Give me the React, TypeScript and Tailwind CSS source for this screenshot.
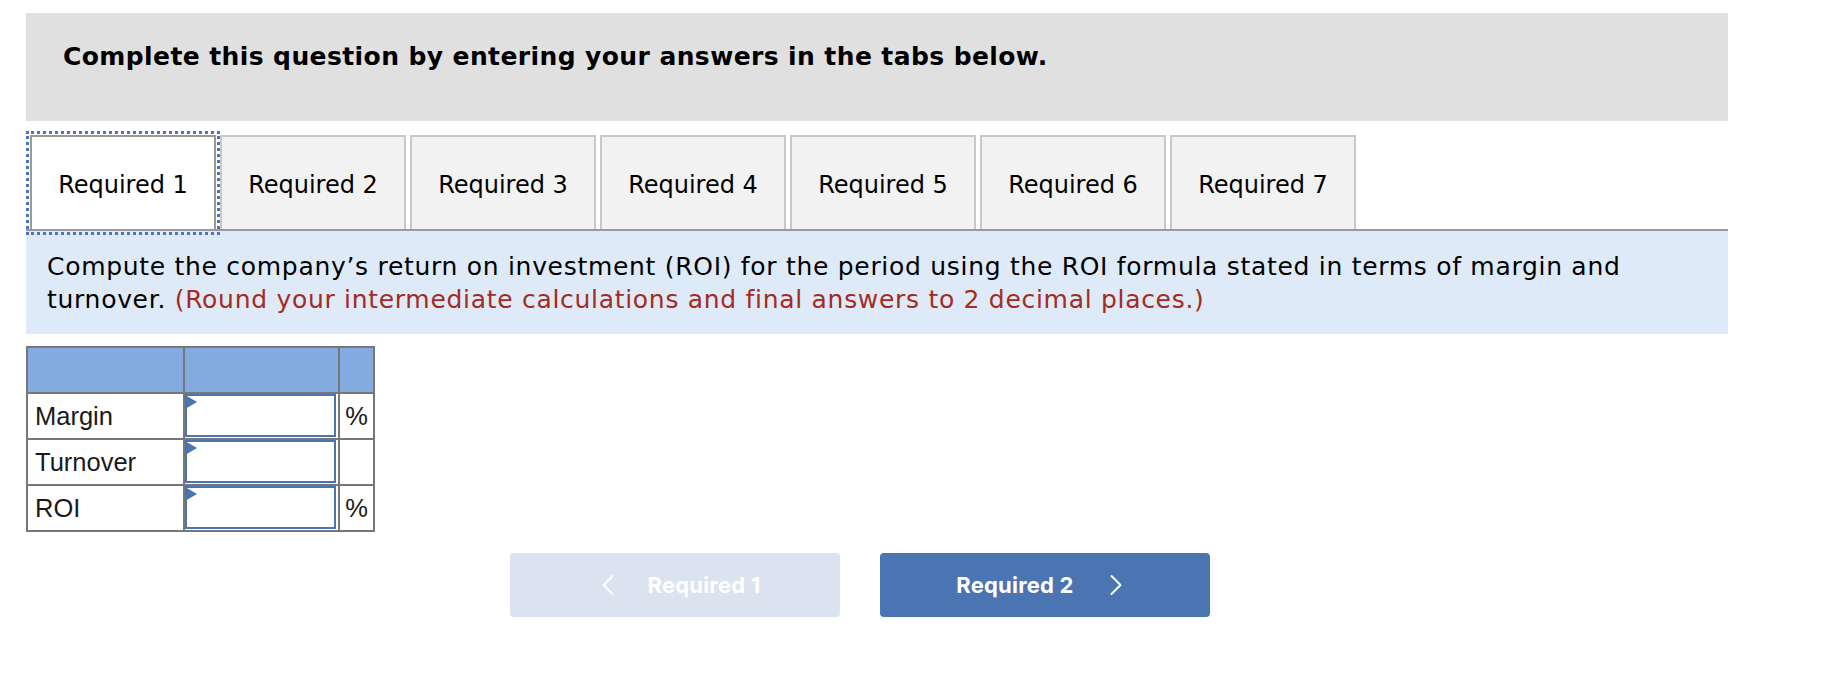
import { ChevronLeft, ChevronRight } from 'lucide-react';

const tabs = ['Required 1', 'Required 2', 'Required 3', 'Required 4', 'Required 5', 'Required 6', 'Required 7'];

const rows = [
  { label: 'Margin', unit: '%' },
  { label: 'Turnover', unit: '' },
  { label: 'ROI', unit: '%' },
];

function InputCell() {
  return (
    <div className="relative h-full w-full pr-[2px] pb-[1px]">
      <div className="h-full w-full border-2 border-[#4a74b4] bg-white" />
      <svg className="absolute left-0 top-[1px]" width="12" height="15" viewBox="0 0 12 15">
        <polygon points="0,0 12,7 0,14" fill="#4a74b4" />
      </svg>
    </div>
  );
}

export default function App() {
  return (
    <div className="min-h-[684px] w-[1830px] bg-white pl-[26px] pt-[13px]" style={{ fontFamily: '"DejaVu Sans", Verdana, sans-serif' }}>
      <div className="w-[1702px]">
        {/* Instruction header */}
        <div className="h-[108px] bg-[#e0e0e0] px-[37px] pt-[30px]">
          <h2 className="text-[25px] font-bold leading-[28px] tracking-[0.4px] text-black">
            Complete this question by entering your answers in the tabs below.
          </h2>
        </div>

        {/* Tabs */}
        <div className="mt-[14px] flex gap-[4px] border-b-2 border-[#999] pl-[4px]">
          {tabs.map((t, i) =>
            i === 0 ? (
              <div
                key={t}
                className="-mb-[2px] flex h-[96px] w-[186px] items-center justify-center border-2 border-[#999] bg-white pt-[3px] text-[24px] text-black outline-[3px] outline-offset-[1px] outline-dotted outline-[#4a74c0]"
              >
                {t}
              </div>
            ) : (
              <div
                key={t}
                className="flex h-[94px] w-[186px] items-center justify-center border-2 border-b-0 border-[#c8c8c8] bg-[#f2f2f2] pt-[3px] text-[24px] text-black"
              >
                {t}
              </div>
            )
          )}
        </div>

        {/* Prompt */}
        <div className="h-[103px] bg-[#deeaf7] px-[21px] pt-[19px] text-[25px] leading-[33px] tracking-[0.7px] text-black">
          Compute the company’s return on investment (ROI) for the period using the ROI formula stated in terms of margin and
          turnover. <span className="text-[#a52a22]">(Round your intermediate calculations and final answers to 2 decimal places.)</span>
        </div>

        {/* Table */}
        <div
          className="mt-[12px] grid w-[349px] grid-cols-[155px_153px_33px] gap-[2px] border-2 border-[#777] bg-[#777] text-[25.5px] text-[#1a1a1a]"
          style={{ fontFamily: '"Liberation Sans", Arial, sans-serif' }}
        >
          <div className="h-[44px] bg-[#83abdf]" />
          <div className="h-[44px] bg-[#83abdf]" />
          <div className="h-[44px] bg-[#83abdf]" />
          {rows.map((r) => (
            <div key={r.label} className="contents">
              <div className="flex h-[44px] items-center bg-white pl-[7px]">{r.label}</div>
              <div className="h-[44px] bg-white">
                <InputCell />
              </div>
              <div className="flex h-[44px] items-center justify-center bg-white">{r.unit}</div>
            </div>
          ))}
        </div>

        {/* Navigation buttons */}
        <div className="mt-[21px] flex gap-[40px] pl-[484px]" style={{ fontFamily: 'Inter, Roboto, "Liberation Sans", sans-serif' }}>
          <button className="flex h-[64px] w-[330px] items-center justify-center gap-[22px] rounded-[4px] bg-[#dae3ef] text-[22px] font-bold tracking-[0.2px] text-white">
            <ChevronLeft size={36} strokeWidth={1.3} />
            <span>Required 1</span>
          </button>
          <button className="flex h-[64px] w-[330px] items-center justify-center gap-[24px] rounded-[4px] bg-[#4a74b2] text-[22px] font-bold tracking-[0.2px] text-white">
            <span>Required 2</span>
            <ChevronRight size={36} strokeWidth={1.3} />
          </button>
        </div>
      </div>
    </div>
  );
}
